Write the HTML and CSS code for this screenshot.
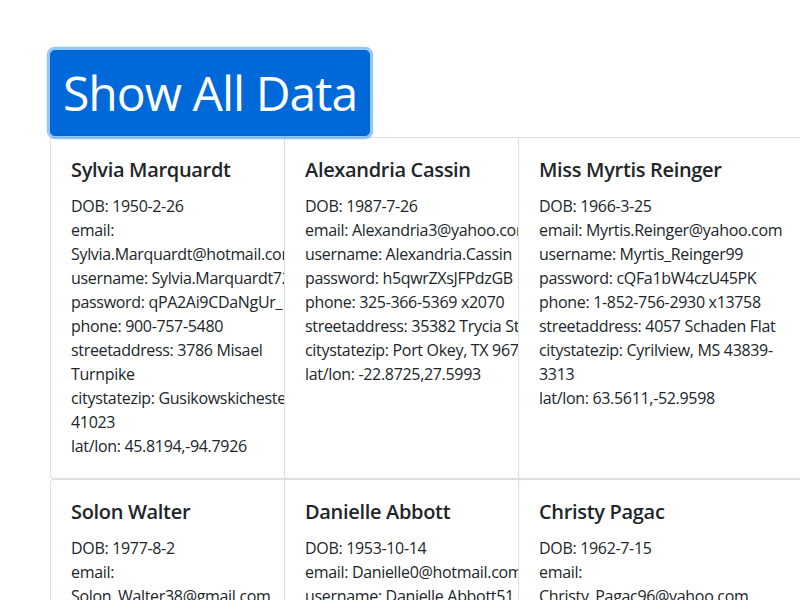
FILE: index.html
```html
<!DOCTYPE html>
<html>
<head>
<meta charset="utf-8">
<link rel="stylesheet" href="styles.css">
</head>
<body>
<div class="page">
  <button class="btn">Show All Data</button>
  <div class="grid">
    <div class="card"><div class="card-body">
      <h5 class="title">Sylvia Marquardt</h5>
      <div class="line">DOB: 1950-2-26</div>
      <div class="line">email: Sylvia.Marquardt@hotmail.com</div>
      <div class="line">username: Sylvia.Marquardt72</div>
      <div class="line">password: qPA2Ai9CDaNgUr_</div>
      <div class="line">phone: 900-757-5480</div>
      <div class="line">streetaddress: 3786 Misael Turnpike</div>
      <div class="line">citystatezip: Gusikowskichester, IL 41023</div>
      <div class="line">lat/lon: 45.8194,-94.7926</div>
    </div></div>
    <div class="card"><div class="card-body">
      <h5 class="title">Alexandria Cassin</h5>
      <div class="line">DOB: 1987-7-26</div>
      <div class="line">email: Alexandria3@yahoo.com</div>
      <div class="line">username: Alexandria.Cassin</div>
      <div class="line">password: h5qwrZXsJFPdzGB</div>
      <div class="line">phone: 325-366-5369 x2070</div>
      <div class="line">streetaddress: 35382 Trycia Stra</div>
      <div class="line">citystatezip: Port Okey, TX 96712</div>
      <div class="line">lat/lon: -22.8725,27.5993</div>
    </div></div>
    <div class="card"><div class="card-body">
      <h5 class="title">Miss Myrtis Reinger</h5>
      <div class="line">DOB: 1966-3-25</div>
      <div class="line">email: Myrtis.Reinger@yahoo.com</div>
      <div class="line">username: Myrtis_Reinger99</div>
      <div class="line">password: cQFa1bW4czU45PK</div>
      <div class="line">phone: 1-852-756-2930 x13758</div>
      <div class="line">streetaddress: 4057 Schaden Flat</div>
      <div class="line">citystatezip: Cyrilview, MS 43839-3313</div>
      <div class="line">lat/lon: 63.5611,-52.9598</div>
    </div></div>
    <div class="card"><div class="card-body">
      <h5 class="title">Solon Walter</h5>
      <div class="line">DOB: 1977-8-2</div>
      <div class="line">email: Solon_Walter38@gmail.com</div>
      <div class="line">username: Solon_Walter</div>
      <div class="line">password: Zx8TqLm2VbR9kWd</div>
      <div class="line">phone: 614-203-8841</div>
      <div class="line">streetaddress: 912 Kuhn Ramp</div>
      <div class="line">citystatezip: Lake Jaden, OH 44102</div>
      <div class="line">lat/lon: 12.4471,-80.1135</div>
    </div></div>
    <div class="card"><div class="card-body">
      <h5 class="title">Danielle Abbott</h5>
      <div class="line">DOB: 1953-10-14</div>
      <div class="line">email: Danielle0@hotmail.com</div>
      <div class="line">username: Danielle.Abbott51</div>
      <div class="line">password: Ht7pQwE3nYs2LcU</div>
      <div class="line">phone: 772-418-0936</div>
      <div class="line">streetaddress: 58 Marvin Lane</div>
      <div class="line">citystatezip: Hoegerton, KY 40412</div>
      <div class="line">lat/lon: -41.2088,102.6637</div>
    </div></div>
    <div class="card"><div class="card-body">
      <h5 class="title">Christy Pagac</h5>
      <div class="line">DOB: 1962-7-15</div>
      <div class="line">email: Christy_Pagac96@yahoo.com</div>
      <div class="line">username: Christy.Pagac</div>
      <div class="line">password: mN4bV8cX2zL6kJh</div>
      <div class="line">phone: 505-331-7720</div>
      <div class="line">streetaddress: 210 Bode Court</div>
      <div class="line">citystatezip: Westbury, NM 87102</div>
      <div class="line">lat/lon: 33.9021,-12.4470</div>
    </div></div>
  </div>
</div>
</body>
</html>
```

FILE: styles.css
```css
html, body {
  margin: 0;
  padding: 0;
  overflow: hidden;
  background: #fff;
}
body {
  font-family: "Open Sans", "Noto Sans", sans-serif;
  font-size: 16px;
  letter-spacing: -0.02em;
  color: #212529;
}
.page {
  padding: 50px 0 0 50px;
}
.btn {
  display: block;
  position: relative;
  z-index: 2;
  font-family: inherit;
  font-size: 48px;
  letter-spacing: -0.02em;
  line-height: 72px;
  padding: 6px 12px;
  color: #fff;
  background: #0069d9;
  border: 1px solid #0062cc;
  border-radius: 4.8px;
  box-shadow: 0 0 0 3.2px rgba(38, 143, 255, 0.5);
  cursor: pointer;
}
.grid {
  display: grid;
  grid-template-columns: repeat(3, 234px);
  margin-top: 1px;
}
.card {
  position: relative;
  width: 288px;
  background: #fff;
  border: 1px solid rgba(0, 0, 0, 0.125);
  border-radius: 4px;
  box-sizing: border-box;
}
.card-body {
  padding: 20px;
}
.title {
  margin: 0 0 12px;
  font-size: 20px;
  font-weight: 600;
  line-height: 1.2;
}
.line {
  line-height: 24px;
}
```
